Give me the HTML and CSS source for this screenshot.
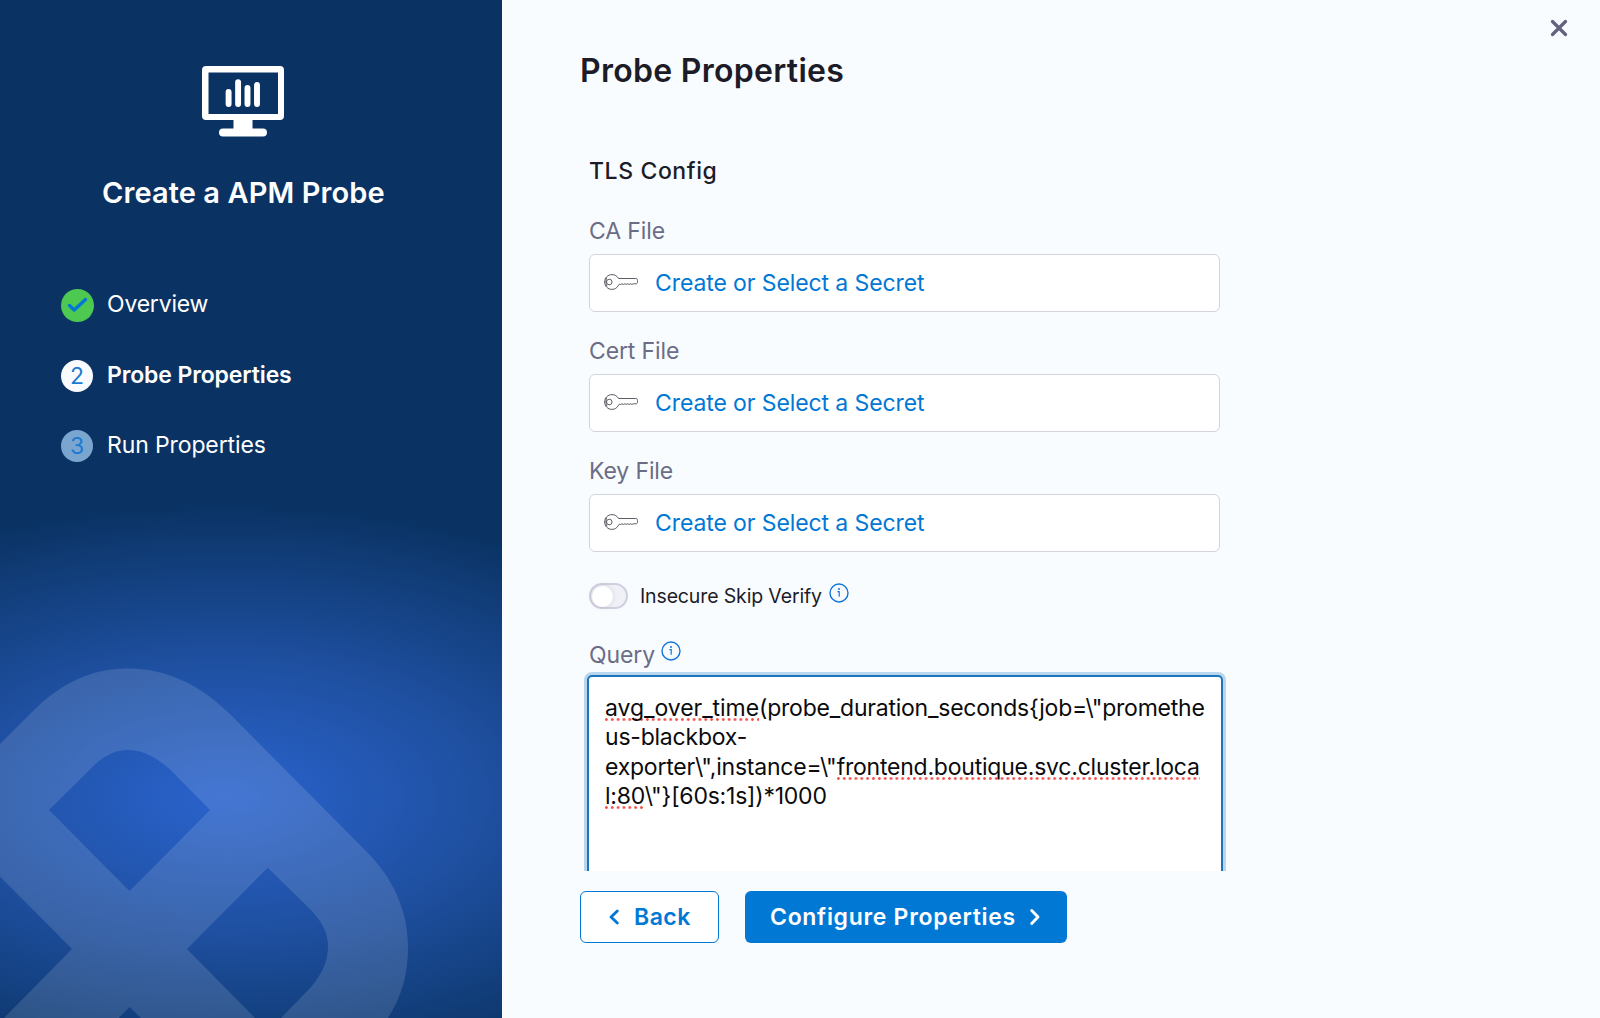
FILE: index.html
```html
<!DOCTYPE html>
<html lang="en">
<head>
<meta charset="utf-8">
<title>Create a APM Probe</title>
<link rel="stylesheet" href="styles.css">
</head>
<body>
<svg class="defs" width="0" height="0" aria-hidden="true">
  <symbol id="key" viewBox="0 0 34 16">
    <g fill="none" stroke="#4b4b55" stroke-width="0.9" stroke-linejoin="round">
      <path d="M14.6 4.500C13.200 2 10.800 .6 8 .6 3.900 .6 .6 3.900 .6 8s3.300 7.400 7.400 7.400c2.800 0 5-1.500 6.300-3.800l1-1.500 1.300.4 1.300-.7 1.400.6 1.400-.6 1.500.6 1.400-.6 1.500.6 1.400-.6 1.500.6 1.300-.6H32c1 0 1.500-.8 1.500-2V6.500c0-1.300-.6-2-1.600-2z"/>
      <circle cx="5.300" cy="8" r="2.800"/>
      <path d="M2.600 3.600C1.500 6 1.700 10 3 12.400"/>
    </g>
  </symbol>
  <symbol id="info" viewBox="0 0 20 20">
    <circle cx="10" cy="10" r="9" fill="none" stroke="#1475d9" stroke-width="1.400"/>
    <circle cx="10" cy="5.900" r="1" fill="#1475d9"/>
    <path d="M8.500 8.700h1.700v5" fill="none" stroke="#1475d9" stroke-width="1.200"/>
  </symbol>
</svg>
<div class="wizard">
  <aside class="sidebar">
    <svg class="watermark" width="502" height="1018" viewBox="0 0 502 1018" aria-hidden="true">
      <path fill="#fff" fill-opacity=".13" fill-rule="evenodd" d="M0 744 30 714C60 683 92 668.500 127 668.500 165 668.500 198 683 230 714L365 850C394 879 408 911 408 947 408 974 402 996 388 1018H281L311 987C322 974 328 961 328 946 328 933 322 922 311 910L267.700 867.700 187 949 255 1018H141L129.600 1007 118.500 1018H4L72 949 0 876.500ZM49 810 91 768.500C102 757 114 750 128 750 142 750 156 757 170 769.500L210 810 129.600 891Z"/>
    </svg>
    <svg class="monitor" width="82" height="71" viewBox="0 0 82 71" aria-hidden="true">
      <path fill="#fff" fill-rule="evenodd" d="M4 0H78Q82 0 82 4V50Q82 54 78 54H50.500V62.500H61A4 4 0 0 1 61 70.500H21A4 4 0 0 1 21 62.500H31.500V54H4Q0 54 0 50V4Q0 0 4 0ZM6.500 6.500V48H76V6.500Z"/>
      <path stroke="#fff" stroke-width="5.900" stroke-linecap="round" d="M26.600 26V38M36.100 16.200V38M45.500 22V38M55 19V38"/>
    </svg>
    <h2 class="wizard-title">Create a APM Probe</h2>
    <ol class="steps">
      <li class="step"><span class="badge done"><svg width="33" height="33" viewBox="0 0 33 33"><path d="m8.500 16.500 4.700 4.500L24.500 10.500" fill="none" stroke="#0278d5" stroke-width="3.400" stroke-linecap="round" stroke-linejoin="round"/></svg></span><span class="label overview">Overview</span></li>
      <li class="step second"><span class="badge active">2</span><span class="label current">Probe Properties</span></li>
      <li class="step third"><span class="badge pending">3</span><span class="label run">Run Properties</span></li>
    </ol>
  </aside>
  <main class="content">
    <button class="close" aria-label="Close"><svg width="18" height="18" viewBox="0 0 18 18"><path d="M2.500 2.500 15.500 15.500M15.500 2.500 2.500 15.500" stroke="#63637f" stroke-width="3.300" stroke-linecap="round"/></svg></button>
    <h1 class="heading">Probe Properties</h1>
    <section class="form">
      <h3 class="section-title">TLS Config</h3>
      <div class="field"><span class="field-label ca">CA File</span><div class="secret"><svg width="34" height="16"><use href="#key"/></svg><span class="secret-text">Create or Select a Secret</span></div></div>
      <div class="field"><span class="field-label cert">Cert File</span><div class="secret"><svg width="34" height="16"><use href="#key"/></svg><span class="secret-text">Create or Select a Secret</span></div></div>
      <div class="field"><span class="field-label keyfile">Key File</span><div class="secret"><svg width="34" height="16"><use href="#key"/></svg><span class="secret-text">Create or Select a Secret</span></div></div>
      <div class="switch-row"><span class="switch"><span class="knob"></span></span><span class="switch-text">Insecure Skip Verify</span><svg class="info" width="20" height="20"><use href="#info"/></svg></div>
      <div class="query-row"><span class="field-label query">Query</span><svg class="info" width="20" height="20"><use href="#info"/></svg></div>
      <div class="query-box"><span class="spell first">avg_over_time</span><span>(probe_duration_seconds{job=\"promethe</span><br><span>us-blackbox-</span><br><span>exporter\",instance=\"</span><span class="spell">frontend.boutique.svc.cluster.loca</span><br><span class="spell">l:80</span><span>\"}[60s:1s])*1000</span></div>
    </section>
    <footer class="actions">
      <button class="btn back"><svg width="12" height="18" viewBox="0 0 12 18"><path d="M9.300 3 3 9l6.300 6" fill="none" stroke="currentColor" stroke-width="2.900" stroke-linecap="round" stroke-linejoin="round"/></svg><span>Back</span></button>
      <button class="btn primary"><span>Configure Properties</span><svg width="12" height="18" viewBox="0 0 12 18"><path d="M2.700 2.500 9 9l-6.300 6.500" fill="none" stroke="currentColor" stroke-width="2.900" stroke-linecap="round" stroke-linejoin="round"/></svg></button>
    </footer>
  </main>
</div>
</body>
</html>
```
FILE: styles.css
```css
* { box-sizing: border-box; }
body { margin: 0; font-family: Inter, "Liberation Sans", sans-serif; color: #0b0b0d; }
h1, h2, h3, ol { margin: 0; padding: 0; }
svg { display: block; flex: none; }
button { font-family: inherit; margin: 0; padding: 0; }
.defs { position: absolute; }
.wizard { display: flex; width: 1600px; height: 1018px; overflow: hidden; background: #f9fcff; }

.sidebar {
  position: relative;
  width: 502px;
  flex: none;
  display: flex;
  flex-direction: column;
  padding-top: 66px;
  color: #fff;
  background: radial-gradient(ellipse 560px 292px at 226px 797px, #2a63cd 0%, #1e4f9f 48%, #0a3364 100%);
}
.watermark { position: absolute; left: 0; top: 0; }
.monitor { margin-left: 202px; }
.wizard-title { position: relative; margin-top: 36px; padding-left: 102px; font-size: 29px; line-height: 40px; font-weight: 600; letter-spacing: .09px; white-space: nowrap; }
.steps { position: relative; list-style: none; margin-top: 57px; padding-left: 61px; }
.step { display: flex; align-items: center; height: 70px; }
.step.second { height: 72px; }
.step.third { height: 68px; }
.badge { width: 32px; height: 32px; flex: none; border-radius: 50%; display: flex; align-items: center; justify-content: center; font-size: 23px; color: #1b7ad2; }
.badge.done { width: 33px; height: 33px; background: #4dc952; margin-right: -1px; }
.badge.active { background: #fafbff; }
.badge.pending { background: #7aa5cf; }
.label { margin-left: 14px; padding-bottom: 2px; font-size: 23px; line-height: 30px; letter-spacing: -.12px; white-space: nowrap; }
.overview { letter-spacing: -.2px; }
.current { font-weight: 600; }

.content { position: relative; flex: 1; padding-left: 78px; }
.close { position: absolute; left: 1048px; top: 19px; border: 0; background: none; }
.heading { padding-top: 47px; font-size: 32px; line-height: 48px; font-weight: 600; letter-spacing: .29px; color: #1c1c28; white-space: nowrap; }
.form { height: 776px; overflow: hidden; padding: 59px 0 0 9px; }
.section-title { font-size: 23px; line-height: 34px; font-weight: 500; letter-spacing: .6px; color: #1c1c28; }
.field { height: 120px; padding-top: 27px; }
.field-label { display: block; height: 39px; font-size: 23px; line-height: 32px; letter-spacing: -.12px; color: #6b6d85; white-space: nowrap; }
.secret { display: flex; align-items: center; width: 631px; height: 58px; padding-left: 14px; border: 1px solid #d3d4dc; border-radius: 6px; background: #fff; }
.secret svg { margin-top: -2px; }
.secret-text { margin-left: 17px; font-size: 23px; line-height: 30px; letter-spacing: -.1px; color: #0278d5; white-space: nowrap; }
.switch-row { display: flex; align-items: center; height: 30px; margin-top: 33px; }
.switch { width: 39px; height: 26px; padding: 1px; border: 2px solid #cfcfe0; border-radius: 13px; background: #f0f0f7; }
.knob { display: block; width: 21px; height: 21px; margin-top: -.5px; border-radius: 50%; background: #fff; box-shadow: 0 0 5px #60617033; }
.switch-text { margin-left: 12px; font-size: 19.500px; line-height: 28px; letter-spacing: -.14px; color: #1c1c28; white-space: nowrap; }
.switch-row .info { margin: -6px 0 0 7px; }
.query-row { display: flex; height: 36px; margin-top: 28px; }
.query-row .info { margin: 2px 0 0 6px; }
.query-box { width: 636px; height: 260px; margin: 0 0 0 -2px; padding: 17px 16px; border: 2px solid #1b75bc; border-radius: 5px; box-shadow: 0 0 0 3px #b9d6ec; background: #fff; font-size: 23px; line-height: 29.300px; letter-spacing: -.22px; white-space: nowrap; }
.spell { background: radial-gradient(circle at 1.400px 1.500px, #f4544e 1px, #f4544e00 1.700px) 0 24px / 5.850px 3px repeat-x; }
.spell.first { letter-spacing: -.05px; }

.actions { display: flex; gap: 26px; margin-top: 20px; }
.btn { display: flex; align-items: center; height: 52px; border-radius: 6px; font-size: 23px; font-weight: 600; letter-spacing: .5px; line-height: 30px; white-space: nowrap; }
.back { width: 139px; padding-left: 27px; gap: 14px; color: #0278d5; background: #fff; border: 1.500px solid #0278d5; }
.primary { width: 322px; padding-left: 25px; gap: 13px; letter-spacing: .7px; color: #fff; background: #0278d5; border: 0; }
```
